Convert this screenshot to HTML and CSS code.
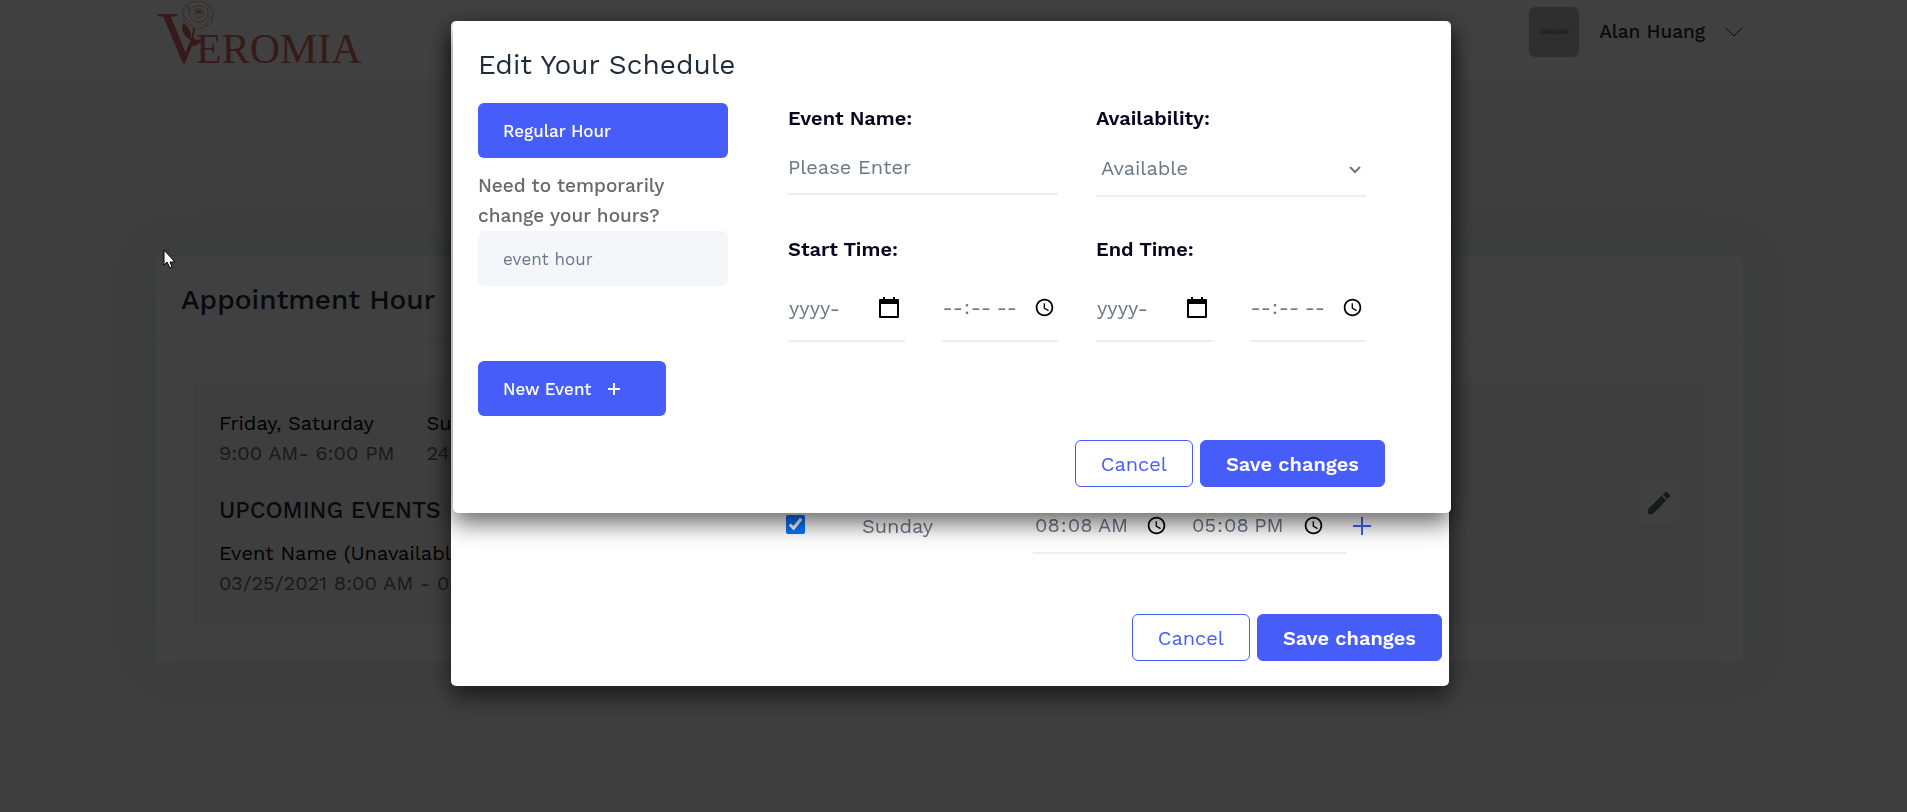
FILE: index.html
```html
<!DOCTYPE html>
<html lang="en">
<head>
    <meta charset="UTF-8">
    <meta name="viewport" content="width=device-width, initial-scale=1.0">
    <title>Veromia | Appointment Hour</title>
    <link rel="stylesheet" href="styles.css">
</head>
<body>
    <header class="header">
        <div class="container header-inner">
            <a href="#" class="logo" aria-label="Veromia">
                <svg width="210" height="79" viewBox="0 0 210 79">
                    <g fill="#d86a6a">
                        <text x="1" y="63" font-size="74">V</text>
                        <path d="M26 0H62V64H40V38H26Z" fill="#fff"/>
                        <text x="40" y="63" font-size="42">EROMIA</text>
                        <path d="M27 23C33 27 37 33 34 40C28 36 24 30 27 23Z"/>
                        <path d="M33 45C35 40 40 39 46 40C43 45 38 47 33 45Z"/>
                    </g>
                    <g fill="none" stroke="#dba3a3">
                        <path d="M38 28C38 34 36 38 34 44" stroke="#d86a6a" stroke-width="2"/>
                        <path d="M31 6C33 2 38 1 42 2C46 0 51 3 53 7C58 9 58 14 56 17C57 22 54 26 49 26C45 30 39 30 36 26C31 26 27 22 28 17C26 12 27 8 31 6Z"/>
                        <path d="M33 10C37 5 47 4 51 9C54 13 51 21 45 22C38 24 32 18 33 10Z"/>
                        <path d="M37 11C41 7 47 9 48 13C48 18 41 19 39 15C39 12 42 11 45 13"/>
                        <path d="M29 17C32 20 33 23 36 26M56 17C52 19 51 23 49 26M32 6C33 8 32 9 33 10"/>
                        <path d="M40 12C42 10 45 10 46 12C45 13 42 13 40 12Z" stroke="#d86a6a"/>
                    </g>
                </svg>
            </a>
            <button class="user-menu">
                <span class="avatar">350x350</span>
                <span>Alan Huang</span>
                <svg class="user-arrow" width="18" height="16" viewBox="0 0 18 16" fill="none" stroke="currentColor" stroke-linecap="round"><path d="M1 4l8 8 8-8"/></svg>
            </button>
        </div>
    </header>

    <main class="container">
        <hr class="divider">
        <section class="card">
            <h2 class="card-title">Appointment Hour</h2>
            <div class="card-body">
                <div class="hours">
                    <div>
                        <div class="hours-row">
                            <div>
                                <p class="dark">Friday, Saturday</p>
                                <p>9:00 AM- 6:00 PM</p>
                            </div>
                            <div>
                                <p class="dark">Sunday</p>
                                <p>24 Hours</p>
                            </div>
                        </div>
                        <h3>UPCOMING EVENTS</h3>
                        <p class="dark">Event Name (Unavailable)</p>
                        <p>03/25/2021 8:00 AM - 03/26/2021</p>
                    </div>
                    <button class="edit-btn" aria-label="Edit">
                        <svg width="30" height="30" viewBox="0 0 24 24" fill="currentColor"><path d="M3 17.200V21h3.800L17.800 9.900l-3.700-3.700zM20.700 7c.4-.4.4-1 0-1.400l-2.300-2.300c-.4-.4-1-.4-1.400 0l-2 2 3.700 3.700z"/></svg>
                    </button>
                </div>
            </div>
        </section>
    </main>

    <div class="backdrop"></div>

    <div class="modal-layer">
        <form class="modal hours-modal">
            <div class="day-row">
                <input type="checkbox" id="sunday" checked>
                <label for="sunday">Sunday</label>
                <div class="day-times">
                    <input type="time" value="08:08" aria-label="Opens at">
                    <input type="time" value="17:08" aria-label="Closes at">
                </div>
                <button type="button" class="add-time" aria-label="Add time">
                    <svg width="18" height="18" viewBox="0 0 18 18" stroke="currentColor" stroke-width="2"><path d="M9 0v18M0 9h18"/></svg>
                </button>
            </div>
            <div class="modal-footer">
                <button type="button" class="btn btn-outline">Cancel</button>
                <button type="button" class="btn btn-primary">Save changes</button>
            </div>
        </form>
    </div>

    <div class="modal-layer">
        <form class="modal event-modal">
            <h1>Edit Your Schedule</h1>
            <div class="modal-body">
                <div class="side">
                    <button type="button" class="tab tab-active">Regular Hour</button>
                    <p>Need to temporarily change your hours?</p>
                    <button type="button" class="tab">event hour</button>
                    <button type="button" class="tab tab-active tab-new">New Event
                        <svg width="12" height="12" viewBox="0 0 12 12" stroke="currentColor" stroke-width="2"><path d="M6 0v12M0 6h12"/></svg>
                    </button>
                </div>
                <div class="fields">
                    <div class="field">
                        <label for="eventName">Event Name:</label>
                        <input type="text" id="eventName" class="control" placeholder="Please Enter">
                    </div>
                    <div class="field">
                        <label for="availability">Availability:</label>
                        <div class="select-box">
                            <select id="availability" class="control">
                                <option>Available</option>
                                <option>Unavailable</option>
                            </select>
                            <svg width="12" height="8" viewBox="0 0 12 8" fill="none" stroke="currentColor" stroke-width="2"><path d="M1 1l5 5 5-5"/></svg>
                        </div>
                    </div>
                    <div class="field">
                        <label for="startDate">Start Time:</label>
                        <div class="date-time">
                            <div class="date-box">
                                <input type="text" id="startDate" placeholder="yyyy-">
                                <button type="button" aria-label="Choose start date">
                                    <svg width="20" height="22" viewBox="0 0 20 22"><path d="M1 2h18v5H1zM4 0h2v3H4zM14 0h2v3h-2z"/><path d="M1 3h18v17H1z" fill="none" stroke="#000" stroke-width="2" stroke-linejoin="round"/></svg>
                                </button>
                            </div>
                            <input type="time" aria-label="Start time">
                        </div>
                    </div>
                    <div class="field">
                        <label for="endDate">End Time:</label>
                        <div class="date-time">
                            <div class="date-box">
                                <input type="text" id="endDate" placeholder="yyyy-">
                                <button type="button" aria-label="Choose end date">
                                    <svg width="20" height="22" viewBox="0 0 20 22"><path d="M1 2h18v5H1zM4 0h2v3H4zM14 0h2v3h-2z"/><path d="M1 3h18v17H1z" fill="none" stroke="#000" stroke-width="2" stroke-linejoin="round"/></svg>
                                </button>
                            </div>
                            <input type="time" aria-label="End time">
                        </div>
                    </div>
                </div>
            </div>
            <div class="modal-footer">
                <button type="button" class="btn btn-outline">Cancel</button>
                <button type="button" class="btn btn-primary">Save changes</button>
            </div>
        </form>
    </div>

    <svg class="cursor" width="14" height="20" viewBox="0 0 14 20"><path d="M1 1v15l3-3 3 6 2-1-2-5h5z" fill="#fff" stroke="#000"/></svg>
</body>
</html>
```

FILE: styles.css
```css
* {
    margin: 0;
    padding: 0;
    box-sizing: border-box;
}

body {
    font-family: 'Work Sans', Inter, sans-serif;
    font-size: 20px;
    line-height: 30px;
    color: #696969;
    background: #f5f5f5;
    min-height: 100vh;
    padding-right: 8px;
    overflow: hidden;
}

button,
input,
select {
    font: inherit;
    color: inherit;
    border: none;
    background: none;
}

button {
    cursor: pointer;
}

.container {
    width: 100%;
    max-width: 1587px;
    margin: 0 auto;
}

/* Header */
.header {
    background: #fff;
    margin-right: -8px;
    padding-right: 8px;
}

.header-inner {
    display: flex;
    justify-content: space-between;
    align-items: flex-start;
    height: 79px;
}

.logo {
    font-family: 'Liberation Serif', serif;
    line-height: 0;
}

.user-menu {
    display: flex;
    align-items: center;
    gap: 20px;
    padding-top: 7px;
    color: #1f2d3d;
    font-size: 19px;
    font-weight: 500;
}

.avatar {
    width: 50px;
    height: 50px;
    border-radius: 6px;
    background: #bbb;
    color: #777;
    font-size: 7px;
    font-weight: bold;
    line-height: 50px;
    text-align: center;
}

/* Appointment card */
.divider {
    border: none;
    border-top: 1px solid #eee;
    margin-top: 146px;
}

.card {
    margin-top: 30px;
    background: #fff;
    border-radius: 6px;
    box-shadow: 0 0 50px rgba(82, 143, 193, 0.1);
}

.card-title {
    padding: 29px 25px 28px;
    border-bottom: 1px solid #f2f2f2;
    font-size: 28px;
    font-weight: 500;
    color: #1d2c38;
}

.card-body {
    padding: 38px 37px;
}

.hours {
    display: flex;
    justify-content: space-between;
    align-items: center;
    padding: 26px;
    background: #f5f5f5;
}

.hours-row {
    display: flex;
    gap: 32px;
    margin-bottom: 28px;
}

.hours .dark {
    color: #000;
}

.hours h3 {
    margin-bottom: 12px;
    font-size: 23px;
    font-weight: 500;
    color: #1d2c38;
}

.edit-btn {
    display: flex;
    align-items: center;
    justify-content: center;
    width: 42px;
    height: 42px;
    border-radius: 6px;
    background: #fff;
    color: #5f6470;
}

/* Modals */
.backdrop {
    position: fixed;
    inset: 0;
    background: rgba(0, 0, 0, 0.75);
}

.modal-layer {
    position: fixed;
    inset: 0;
    padding: 21px 7px 21px 0;
}

.modal-layer + .modal-layer {
    padding-right: 3px;
}

.modal {
    display: flex;
    flex-direction: column;
    width: 100%;
    max-width: 998px;
    margin: 0 auto;
    background: #fff;
    border-radius: 5px;
    box-shadow: 0 10px 24px rgba(0, 0, 0, 0.6);
}

.hours-modal {
    min-height: 665px;
    justify-content: flex-end;
    padding: 0 7px 25px;
}

.event-modal {
    padding: 26px 26px 26px 25px;
}

h1 {
    margin-bottom: 20px;
    font-size: 28px;
    font-weight: 400;
    line-height: 36px;
    color: #1d2c38;
}

.modal-body {
    display: flex;
    gap: 60px;
}

.side {
    flex: 0 0 250px;
}

.side p {
    margin-top: 13px;
    font-size: 19px;
    font-weight: 500;
}

.tab {
    display: flex;
    align-items: center;
    width: 100%;
    height: 55px;
    padding: 0 25px;
    border-radius: 6px;
    background: #f4f6fa;
    color: #6b7785;
    font-size: 17px;
}

.tab-active {
    background: #465dfa;
    color: #fff;
    font-weight: 500;
}

.tab-new {
    width: 75%;
    margin-top: 75px;
    gap: 16px;
}

.fields {
    flex: 1;
    display: grid;
    grid-template-columns: 1fr 1fr;
    align-content: start;
    gap: 37px 38px;
    padding-right: 59px;
}

.field label {
    display: block;
    font-weight: 600;
    color: #05051e;
}

.control {
    display: block;
    width: 100%;
    height: 62px;
    padding-top: 8px;
    border-bottom: 2px solid #ededf3;
    color: #6b7785;
}

.select-box {
    position: relative;
    color: #6b7785;
}

.select-box .control {
    height: 64px;
    padding-left: 5px;
    appearance: none;
}

.select-box svg {
    position: absolute;
    right: 5px;
    top: 33px;
    pointer-events: none;
}

::placeholder {
    color: #6b7785;
    opacity: 1;
}

.date-time {
    display: grid;
    grid-template-columns: minmax(0, 1fr) minmax(0, 1fr);
    gap: 37px;
    margin-top: 12px;
}

.date-box,
.date-time input[type="time"] {
    width: 100%;
    height: 66px;
    padding-bottom: 2px;
    border-bottom: 2px solid #ededf3;
    color: #6b7785;
}

.date-box {
    display: flex;
    align-items: center;
    justify-content: space-between;
    padding: 0 6px 0 1px;
}

.date-box input {
    width: 70px;
}

.date-box button {
    line-height: 0;
}

.modal-footer {
    display: flex;
    justify-content: flex-end;
    gap: 7px;
}

.event-modal .modal-footer {
    margin-top: 24px;
    padding-right: 40px;
}

.btn {
    height: 47px;
    padding: 0 25px;
    border: 1px solid #465dfa;
    border-radius: 6px;
}

.btn-outline {
    color: #465dfa;
}

.btn-primary {
    background: #465dfa;
    color: #fff;
    font-weight: 600;
}

.day-row {
    display: grid;
    grid-template-columns: 76px 171px 314px auto;
    align-items: center;
    margin-bottom: 60px;
    padding-left: 328px;
    color: #6b7785;
}

.day-row input[type="checkbox"] {
    width: 19px;
    height: 19px;
}

.day-row label,
.add-time {
    padding-top: 4px;
}

.day-times {
    display: flex;
    border-bottom: 2px solid #ededf3;
}

.day-times input {
    flex: 1;
    height: 58px;
    padding: 4px 20px 0 1px;
}

.add-time {
    justify-self: start;
    margin-left: 6px;
    color: #465dfa;
    line-height: 0;
}

.cursor {
    position: fixed;
    left: 163px;
    top: 249px;
}
```
